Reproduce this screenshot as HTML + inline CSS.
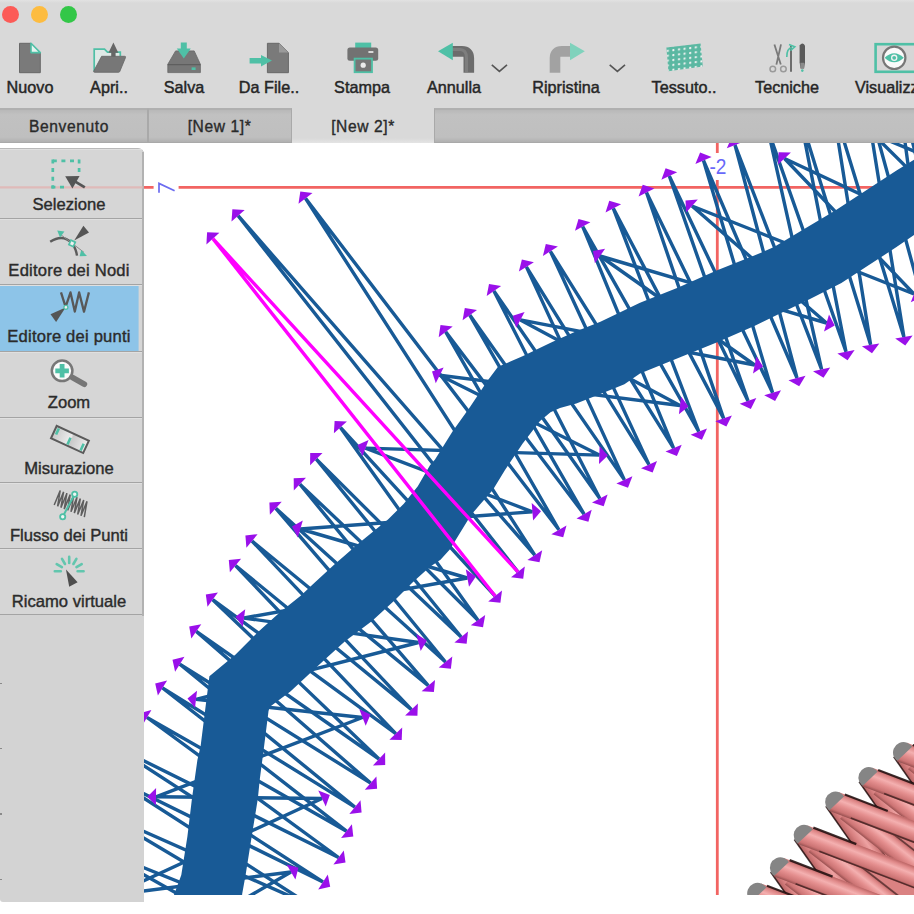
<!DOCTYPE html><html><head><meta charset="utf-8"><title>ui</title><style>

*{margin:0;padding:0;box-sizing:border-box}
html,body{width:914px;height:914px;overflow:hidden;background:#fff;font-family:"Liberation Sans",sans-serif;}
#tb{position:absolute;left:0;top:0;width:914px;height:109px;overflow:hidden;background:linear-gradient(#e2e2e2,#d9d9d9 3px,#d9d9d9);}
.tl{position:absolute;top:6px;width:17px;height:17px;border-radius:50%;}
.lbl{position:absolute;top:77.5px;font-size:16.2px;color:#262626;white-space:nowrap;transform:translateX(-50%);letter-spacing:0px;-webkit-text-stroke:0.45px #262626;}
#tabs{position:absolute;left:0;top:108px;width:914px;height:35px;overflow:hidden;background:linear-gradient(#d9d9d9,#d9d9d9 30px,#e4e4e4);}
.tab{position:absolute;top:0;height:35px;font-size:15.6px;letter-spacing:0.6px;color:#2a2a2a;text-align:center;}
.tab span{position:absolute;left:0;right:0;top:10px;-webkit-text-stroke:0.35px #2a2a2a;}
.tab.in span{top:8px;left:-1px}
.tab.in{background:linear-gradient(#b8b8b8,#c1c1c1 15%,#bfbfbf 85%,#b0b0b0);border:1px solid #a9a9a9;border-top:2px solid #b0b0b0;}
#canvas{position:absolute;left:0;top:143px;width:914px;height:752px;background:#fff;overflow:hidden}
#lp{position:absolute;left:0;top:148px;width:144px;height:753.5px;background:#d3d3d3;border-top:1px solid #b9b9b9;border-top-right-radius:6px;border-bottom-left-radius:3px;}
#lpb{position:absolute;left:141.6px;top:3px;width:2.2px;height:464px;background:#b2b2b2}
.tk{position:absolute;left:0;width:2px;height:1.6px;background:#8a8a8a}
.lb{position:absolute;left:0;width:141.8px;border-bottom:1.6px solid #a4a4a4;border-top:1px solid #e0e0e0;background:#d6d6d6}
.ll{position:absolute;left:0;width:138px;text-align:center;font-size:16.6px;color:#2b2b2b;white-space:nowrap;-webkit-text-stroke:0.4px #2b2b2b;}

</style></head><body>
<div id="canvas"><svg width="914" height="752" viewBox="0 143 914 752" style="position:absolute;left:0;top:0">
<g stroke="#f26462" stroke-width="2.8" fill="none">
<path d="M143 187.4H153.6M178.6 187.4H914M717.3 143V153M717.3 180V895"/>
</g>
<defs><linearGradient id="pk" x1="0" y1="0" x2="0" y2="1"><stop offset="0" stop-color="#bc6666"/><stop offset="0.14" stop-color="#df8888"/><stop offset="0.36" stop-color="#f4b0b0"/><stop offset="0.6" stop-color="#e48e8e"/><stop offset="0.86" stop-color="#cc7474"/><stop offset="1" stop-color="#985050"/></linearGradient><linearGradient id="pk2" x1="0" y1="0" x2="0" y2="1"><stop offset="0" stop-color="#6a3434"/><stop offset="0.12" stop-color="#d07878"/><stop offset="0.4" stop-color="#eea2a2"/><stop offset="0.75" stop-color="#d67e7e"/><stop offset="1" stop-color="#b46262"/></linearGradient></defs><path fill="#da8282" d="M941.7 717.3L1333.8 867.8L1170.4 1077.0L929.5 733.0Z"/><g transform="translate(938 727) rotate(55)"><rect x="0" y="-10.4" width="420" height="20.8" fill="url(#pk2)"/><path d="M-2 10.4H60" stroke="#1c0c0c" stroke-width="1.6" opacity="0.8"/></g><g transform="translate(938 727) rotate(38)"><rect x="14" y="-10.4" width="420" height="20.8" fill="url(#pk)"/><path d="M30 -10.4H150" stroke="#1c0c0c" stroke-width="1.8" opacity="0.55"/></g><g transform="translate(938 727) rotate(21)"><circle r="10.4" fill="#858585"/><path d="M7 -10.4H420V10.4H-3Z" fill="url(#pk)"/><path d="M6 -10.4H52" stroke="#1c0c0c" stroke-width="2.2" opacity="0.85"/><path d="M20 9.4H130" stroke="#1c0c0c" stroke-width="1.6" opacity="0.6"/></g><path fill="#da8282" d="M907.1 742.8L1299.2 893.3L1135.8 1102.5L894.9 758.5Z"/><g transform="translate(903.4 752.5) rotate(55)"><rect x="0" y="-10.4" width="420" height="20.8" fill="url(#pk2)"/><path d="M-2 10.4H60" stroke="#1c0c0c" stroke-width="1.6" opacity="0.8"/></g><g transform="translate(903.4 752.5) rotate(38)"><rect x="14" y="-10.4" width="420" height="20.8" fill="url(#pk)"/><path d="M30 -10.4H150" stroke="#1c0c0c" stroke-width="1.8" opacity="0.55"/></g><g transform="translate(903.4 752.5) rotate(21)"><circle r="10.4" fill="#858585"/><path d="M7 -10.4H420V10.4H-3Z" fill="url(#pk)"/><path d="M6 -10.4H52" stroke="#1c0c0c" stroke-width="2.2" opacity="0.85"/><path d="M20 9.4H130" stroke="#1c0c0c" stroke-width="1.6" opacity="0.6"/></g><path fill="#da8282" d="M872.5 767.8L1264.6 918.3L1101.2 1127.5L860.3 783.5Z"/><g transform="translate(868.8 777.5) rotate(55)"><rect x="0" y="-10.4" width="420" height="20.8" fill="url(#pk2)"/><path d="M-2 10.4H60" stroke="#1c0c0c" stroke-width="1.6" opacity="0.8"/></g><g transform="translate(868.8 777.5) rotate(38)"><rect x="14" y="-10.4" width="420" height="20.8" fill="url(#pk)"/><path d="M30 -10.4H150" stroke="#1c0c0c" stroke-width="1.8" opacity="0.55"/></g><g transform="translate(868.8 777.5) rotate(21)"><circle r="10.4" fill="#858585"/><path d="M7 -10.4H420V10.4H-3Z" fill="url(#pk)"/><path d="M6 -10.4H52" stroke="#1c0c0c" stroke-width="2.2" opacity="0.85"/><path d="M20 9.4H130" stroke="#1c0c0c" stroke-width="1.6" opacity="0.6"/></g><path fill="#da8282" d="M839.2 792.3L1231.3 942.8L1067.9 1152.0L827.0 808.0Z"/><g transform="translate(835.5 802.0) rotate(55)"><rect x="0" y="-10.4" width="420" height="20.8" fill="url(#pk2)"/><path d="M-2 10.4H60" stroke="#1c0c0c" stroke-width="1.6" opacity="0.8"/></g><g transform="translate(835.5 802.0) rotate(38)"><rect x="14" y="-10.4" width="420" height="20.8" fill="url(#pk)"/><path d="M30 -10.4H150" stroke="#1c0c0c" stroke-width="1.8" opacity="0.55"/></g><g transform="translate(835.5 802.0) rotate(21)"><circle r="10.4" fill="#858585"/><path d="M7 -10.4H420V10.4H-3Z" fill="url(#pk)"/><path d="M6 -10.4H52" stroke="#1c0c0c" stroke-width="2.2" opacity="0.85"/><path d="M20 9.4H130" stroke="#1c0c0c" stroke-width="1.6" opacity="0.6"/></g><path fill="#da8282" d="M807.7 825.5L1199.8 976.0L1036.4 1185.2L795.5 841.2Z"/><g transform="translate(804.0 835.2) rotate(55)"><rect x="0" y="-10.4" width="420" height="20.8" fill="url(#pk2)"/><path d="M-2 10.4H60" stroke="#1c0c0c" stroke-width="1.6" opacity="0.8"/></g><g transform="translate(804.0 835.2) rotate(38)"><rect x="14" y="-10.4" width="420" height="20.8" fill="url(#pk)"/><path d="M30 -10.4H150" stroke="#1c0c0c" stroke-width="1.8" opacity="0.55"/></g><g transform="translate(804.0 835.2) rotate(21)"><circle r="10.4" fill="#858585"/><path d="M7 -10.4H420V10.4H-3Z" fill="url(#pk)"/><path d="M6 -10.4H52" stroke="#1c0c0c" stroke-width="2.2" opacity="0.85"/><path d="M20 9.4H130" stroke="#1c0c0c" stroke-width="1.6" opacity="0.6"/></g><path fill="#da8282" d="M784.0 858.0L1176.1 1008.5L1012.7 1217.7L771.8 873.7Z"/><g transform="translate(780.3 867.7) rotate(55)"><rect x="0" y="-10.4" width="420" height="20.8" fill="url(#pk2)"/><path d="M-2 10.4H60" stroke="#1c0c0c" stroke-width="1.6" opacity="0.8"/></g><g transform="translate(780.3 867.7) rotate(38)"><rect x="14" y="-10.4" width="420" height="20.8" fill="url(#pk)"/><path d="M30 -10.4H150" stroke="#1c0c0c" stroke-width="1.8" opacity="0.55"/></g><g transform="translate(780.3 867.7) rotate(21)"><circle r="10.4" fill="#858585"/><path d="M7 -10.4H420V10.4H-3Z" fill="url(#pk)"/><path d="M6 -10.4H52" stroke="#1c0c0c" stroke-width="2.2" opacity="0.85"/><path d="M20 9.4H130" stroke="#1c0c0c" stroke-width="1.6" opacity="0.6"/></g><path fill="#da8282" d="M761.3 883.6L1153.4 1034.1L990.0 1243.3L749.1 899.3Z"/><g transform="translate(757.6 893.3) rotate(55)"><rect x="0" y="-10.4" width="420" height="20.8" fill="url(#pk2)"/><path d="M-2 10.4H60" stroke="#1c0c0c" stroke-width="1.6" opacity="0.8"/></g><g transform="translate(757.6 893.3) rotate(38)"><rect x="14" y="-10.4" width="420" height="20.8" fill="url(#pk)"/><path d="M30 -10.4H150" stroke="#1c0c0c" stroke-width="1.8" opacity="0.55"/></g><g transform="translate(757.6 893.3) rotate(21)"><circle r="10.4" fill="#858585"/><path d="M7 -10.4H420V10.4H-3Z" fill="url(#pk)"/><path d="M6 -10.4H52" stroke="#1c0c0c" stroke-width="2.2" opacity="0.85"/><path d="M20 9.4H130" stroke="#1c0c0c" stroke-width="1.6" opacity="0.6"/></g><path fill="#da8282" d="M738.7 910.3L1130.8 1060.8L967.4 1270.0L726.5 926.0Z"/><g transform="translate(735 920) rotate(55)"><rect x="0" y="-10.4" width="420" height="20.8" fill="url(#pk2)"/><path d="M-2 10.4H60" stroke="#1c0c0c" stroke-width="1.6" opacity="0.8"/></g><g transform="translate(735 920) rotate(38)"><rect x="14" y="-10.4" width="420" height="20.8" fill="url(#pk)"/><path d="M30 -10.4H150" stroke="#1c0c0c" stroke-width="1.8" opacity="0.55"/></g><g transform="translate(735 920) rotate(21)"><circle r="10.4" fill="#858585"/><path d="M7 -10.4H420V10.4H-3Z" fill="url(#pk)"/><path d="M6 -10.4H52" stroke="#1c0c0c" stroke-width="2.2" opacity="0.85"/><path d="M20 9.4H130" stroke="#1c0c0c" stroke-width="1.6" opacity="0.6"/></g>
<g stroke="#185a96" stroke-width="3.4" fill="none" stroke-linejoin="bevel">
<path d="M262.0 1010.0L92.0 925.0L274.0 982.0L95.0 888.0L286.0 955.0L100.0 850.0L298.0 930.0L100.0 812.0L310.0 905.0L114.0 779.0L323.0 882.0L112.0 745.0L338.6 857.5L147.0 717.5L346.5 831.2L162.5 688.0L354.9 807.1L179.8 664.2L370.6 783.1L196.3 631.4L379.0 759.0L212.7 599.7L395.8 733.7L235.5 565.5L411.5 709.6L252.0 541.0L428.3 685.6L275.8 508.3L445.5 662.0L299.9 484.2L461.2 637.0L316.3 459.1L478.0 620.2L340.4 427.4L495.1 596.0"/><path d="M517.9 571.9L238.1 215.7L534.8 555.1L305.5 198.4L558.9 529.8L445.7 331.9L584.1 514.2L469.8 315.1L599.8 498.5L493.9 291.0L624.4 479.9L526.4 266.9L649.0 464.6L550.4 251.3L673.6 448.1L582.7 226.5L698.8 431.7L613.3 208.3L723.6 418.4L646.5 192.5L748.0 400.9L669.3 176.0L772.6 392.8L703.5 160.5L797.0 378.0L735.0 145.0L821.6 369.3L768.0 130.0L846.0 351.8L800.0 116.0L870.6 344.8L832.0 102.0L903.9 337.0L864.0 88.0L930.0 328.0L896.0 75.0L956.0 318.0L928.0 62.0L982.0 308.0L960.0 50.0L1008.0 298.0"/><path d="M262.0 950.0L70.0 1000.0L291.0 872.0L113.0 895.0L322.0 798.5L156.0 796.8L362.5 717.5L196.0 699.4L418.5 642.5L244.0 618.0L467.4 578.0L300.3 529.0L532.4 511.8L365.5 448.1L599.3 455.1L439.7 375.3L680.0 405.5L520.4 319.9L754.7 365.0L600.0 256.0L826.5 323.0L692.0 206.0L914.0 294.0L784.5 158.5L1000.0 260.0L873.0 134.0L1090.0 225.0L965.0 95.0L1180.0 190.0"/>
</g>
<path fill="#185a96" d="M173.6 896.0L181.3 874.9L187.4 836.6L192.0 798.3L197.4 760.0L200.6 746.3L205.0 711.3L209.4 676.3L235.6 654.4L257.5 632.5L279.4 612.8L301.3 595.3L311.0 586.0L333.8 565.0L360.0 542.3L388.0 519.5L403.8 503.8L417.8 486.3L430.0 465.3L435.0 459.5L452.5 431.5L470.0 407.0L487.5 380.8L498.0 366.8L522.5 356.3L552.2 342.1L576.3 331.3L600.4 321.7L624.4 310.2L640.0 302.8L678.3 287.5L716.6 270.6L754.9 255.3L774.0 247.1L804.6 228.8L835.3 210.4L865.9 190.5L896.5 170.6L916.0 158.5L916.0 233.5L896.5 247.1L865.9 267.0L841.4 283.0L810.0 299.0L780.0 313.5L754.9 325.8L716.6 342.6L678.3 357.9L640.0 373.5L624.4 384.2L600.4 393.9L576.3 403.5L560.0 407.9L550.5 412.3L540.0 421.0L522.5 443.8L505.0 470.0L492.8 490.0L480.0 504.6L471.0 515.0L450.0 549.3L440.5 559.8L430.0 566.8L412.5 582.5L395.0 600.0L372.0 621.0L345.0 641.3L323.2 661.0L290.4 691.6L269.6 707.0L268.5 711.3L264.1 746.3L259.7 780.0L257.9 798.3L251.7 836.6L245.6 874.9L241.8 896.0Z"/>
<g fill="#9a10ea">
<path d="M83.8 922.4L94.6 916.6L89.4 933.4Z"/>
<path d="M269.7 1013.8L258.1 1017.9L265.9 1002.1Z"/>
<path d="M86.9 885.2L97.9 879.7L92.1 896.3Z"/>
<path d="M281.6 986.0L269.9 989.8L278.1 974.2Z"/>
<path d="M92.0 846.8L103.3 841.8L96.7 858.2Z"/>
<path d="M293.5 959.2L281.7 962.7L290.3 947.3Z"/>
<path d="M92.1 808.5L103.6 804.0L96.4 820.0Z"/>
<path d="M305.4 934.4L293.5 937.6L302.5 922.4Z"/>
<path d="M106.3 775.2L117.9 771.1L110.1 786.9Z"/>
<path d="M317.2 909.7L305.2 912.4L314.8 897.6Z"/>
<path d="M104.3 741.2L115.9 737.1L108.1 752.9Z"/>
<path d="M330.2 886.7L318.2 889.4L327.8 874.6Z"/>
<path d="M139.5 713.2L151.4 709.9L142.6 725.1Z"/>
<path d="M345.5 862.6L333.4 864.6L343.8 850.4Z"/>
<path d="M155.2 683.5L167.1 680.5L157.9 695.5Z"/>
<path d="M353.3 836.5L341.1 838.1L351.9 824.3Z"/>
<path d="M172.5 659.7L184.5 656.7L175.1 671.7Z"/>
<path d="M361.6 812.5L349.3 813.9L360.5 800.3Z"/>
<path d="M189.2 626.5L201.3 624.2L191.3 638.6Z"/>
<path d="M377.1 788.7L364.8 789.7L376.4 776.5Z"/>
<path d="M205.8 594.6L217.9 592.6L207.5 606.8Z"/>
<path d="M385.2 764.9L372.9 765.4L385.1 752.6Z"/>
<path d="M228.8 560.1L241.1 558.7L229.9 572.3Z"/>
<path d="M401.7 739.9L389.4 739.8L402.2 727.6Z"/>
<path d="M245.4 535.5L257.6 534.2L246.4 547.8Z"/>
<path d="M417.4 715.8L405.1 715.6L417.9 703.6Z"/>
<path d="M269.4 502.5L281.7 501.8L269.9 514.8Z"/>
<path d="M433.9 692.1L421.6 691.3L435.0 679.9Z"/>
<path d="M293.7 478.3L306.0 477.8L293.8 490.6Z"/>
<path d="M450.9 668.7L438.7 667.6L452.3 656.4Z"/>
<path d="M310.2 453.0L322.5 452.9L310.1 465.3Z"/>
<path d="M466.6 643.7L454.4 642.6L468.0 631.4Z"/>
<path d="M334.6 421.1L346.9 421.5L333.9 433.3Z"/>
<path d="M483.0 627.2L470.8 625.3L485.2 615.1Z"/>
<path d="M207.1 232.3L219.4 232.7L206.4 244.5Z"/>
<path d="M500.4 602.7L488.2 601.5L502.0 590.5Z"/>
<path d="M232.4 209.2L244.7 209.9L231.5 221.5Z"/>
<path d="M523.2 578.7L511.0 577.3L524.8 566.5Z"/>
<path d="M300.3 191.6L312.5 193.1L298.5 203.7Z"/>
<path d="M539.5 562.3L527.4 559.9L542.2 550.3Z"/>
<path d="M440.5 325.1L452.7 326.6L438.7 337.2Z"/>
<path d="M563.2 537.3L551.3 534.2L566.5 525.4Z"/>
<path d="M464.8 308.1L477.0 310.0L462.6 320.2Z"/>
<path d="M588.4 521.7L576.5 518.6L591.7 509.8Z"/>
<path d="M489.0 283.9L501.1 286.0L486.7 296.0Z"/>
<path d="M603.7 506.2L592.0 502.5L607.6 494.5Z"/>
<path d="M521.9 259.6L533.9 262.3L518.9 271.5Z"/>
<path d="M628.0 487.7L616.4 483.6L632.4 476.2Z"/>
<path d="M545.8 244.0L557.9 246.6L542.9 256.0Z"/>
<path d="M652.6 472.4L641.0 468.3L657.0 460.9Z"/>
<path d="M578.5 219.0L590.4 222.2L575.0 230.8Z"/>
<path d="M676.9 456.1L665.5 451.4L681.7 444.8Z"/>
<path d="M609.3 200.7L621.1 204.2L605.5 212.4Z"/>
<path d="M701.9 439.7L690.6 434.8L707.0 428.6Z"/>
<path d="M642.7 184.8L654.4 188.6L638.6 196.4Z"/>
<path d="M726.4 426.5L715.3 421.2L731.9 415.6Z"/>
<path d="M665.6 168.2L677.2 172.2L661.4 179.8Z"/>
<path d="M750.8 409.0L739.7 403.8L756.3 398.0Z"/>
<path d="M700.1 152.6L711.6 157.0L695.4 164.0Z"/>
<path d="M775.1 401.0L764.2 395.3L781.0 390.3Z"/>
<path d="M731.9 137.0L743.2 141.8L726.8 148.2Z"/>
<path d="M799.2 386.3L788.5 380.3L805.5 375.7Z"/>
<path d="M765.1 121.9L776.3 127.1L759.7 132.9Z"/>
<path d="M823.5 377.7L813.0 371.2L830.2 367.4Z"/>
<path d="M797.5 107.8L808.4 113.4L791.6 118.6Z"/>
<path d="M847.6 360.2L837.4 353.5L854.6 350.1Z"/>
<path d="M829.5 93.8L840.4 99.4L823.6 104.6Z"/>
<path d="M872.0 353.3L861.9 346.2L879.3 343.4Z"/>
<path d="M861.7 79.7L872.5 85.7L855.5 90.3Z"/>
<path d="M905.3 345.5L895.2 338.4L912.6 335.6Z"/>
<path d="M893.9 66.7L904.5 72.9L887.5 77.1Z"/>
<path d="M931.1 336.5L921.3 329.2L938.7 326.8Z"/>
<path d="M926.2 53.6L936.6 60.1L919.4 63.9Z"/>
<path d="M956.9 326.5L947.3 319.0L964.7 317.0Z"/>
<path d="M958.4 41.6L968.6 48.3L951.4 51.7Z"/>
<path d="M982.7 316.6L973.2 308.7L990.8 307.3Z"/>
<path d="M61.7 1002.2L67.8 991.5L72.2 1008.5Z"/>
<path d="M298.4 867.7L295.4 879.6L286.6 864.4Z"/>
<path d="M104.5 896.1L111.9 886.3L114.1 903.7Z"/>
<path d="M329.8 794.9L325.7 806.5L318.3 790.5Z"/>
<path d="M147.4 796.7L156.1 788.0L155.9 805.6Z"/>
<path d="M370.5 714.4L365.7 725.7L359.3 709.3Z"/>
<path d="M187.5 698.5L197.0 690.7L195.0 708.1Z"/>
<path d="M426.8 640.4L420.7 651.0L416.3 634.0Z"/>
<path d="M235.5 616.8L245.2 609.3L242.8 626.7Z"/>
<path d="M475.9 576.5L469.0 586.7L465.8 569.3Z"/>
<path d="M292.0 526.6L302.8 520.6L297.8 537.4Z"/>
<path d="M541.0 511.2L533.1 520.6L531.7 503.0Z"/>
<path d="M357.5 445.0L368.6 439.9L362.4 456.3Z"/>
<path d="M607.9 455.4L599.0 463.9L599.6 446.3Z"/>
<path d="M432.0 371.5L443.6 367.4L435.8 383.2Z"/>
<path d="M688.5 406.6L678.9 414.2L681.1 396.8Z"/>
<path d="M512.8 315.8L524.6 312.1L516.2 327.7Z"/>
<path d="M763.1 366.6L753.0 373.6L756.4 356.4Z"/>
<path d="M593.0 251.0L605.1 248.8L594.9 263.2Z"/>
<path d="M834.7 325.4L824.0 331.4L829.0 314.6Z"/>
<path d="M685.5 200.4L697.8 199.4L686.2 212.6Z"/>
<path d="M922.0 297.2L910.8 302.2L917.2 285.8Z"/>
<path d="M778.6 152.3L790.9 152.4L778.1 164.6Z"/>
<path d="M1007.8 263.7L996.3 268.0L1003.7 252.0Z"/>
<path d="M866.9 127.9L879.2 127.8L866.8 140.2Z"/>
<path d="M1097.9 228.3L1086.6 233.1L1093.4 216.9Z"/>
<path d="M959.0 88.8L971.3 88.9L958.7 101.1Z"/>
<path d="M1187.9 193.5L1176.4 198.0L1183.6 182.0Z"/>
</g>
<path d="M495.1 596.0L212.9 238.6L517.9 571.9" stroke="#ff00ff" stroke-width="3.4" fill="none" stroke-linejoin="bevel"/>
<path d="M159 192.8V183.4L174.6 190.8" stroke="#6c6cf0" stroke-width="1.7" fill="none"/>
<text x="709.5" y="174.3" font-family="Liberation Sans, sans-serif" font-size="21.5" fill="#6868fa" textLength="17" lengthAdjust="spacingAndGlyphs">-2</text>
</svg></div>
<div id="tb">
<div class="tl" style="left:2px;background:#fc5b57"></div>
<div class="tl" style="left:31px;background:#fdbc40"></div>
<div class="tl" style="left:60px;background:#33c748"></div>
<div class="lbl" style="left:30px">Nuovo</div>
<div class="lbl" style="left:109px">Apri..</div>
<div class="lbl" style="left:184px">Salva</div>
<div class="lbl" style="left:269px">Da File..</div>
<div class="lbl" style="left:362px">Stampa</div>
<div class="lbl" style="left:454px">Annulla</div>
<div class="lbl" style="left:566px">Ripristina</div>
<div class="lbl" style="left:684px">Tessuto..</div>
<div class="lbl" style="left:787px">Tecniche</div>
<div class="lbl" style="left:855px;transform:none">Visualizza</div>
<svg width="914" height="108" viewBox="0 0 914 108" style="position:absolute;left:0;top:0"><path d="M19.5 43.3H31L40.3 52.6V72.7H19.5Z" fill="#7a7a7a" stroke="#686868" stroke-width="1"/><path d="M31 43.3L40.3 52.6H31Z" fill="#e6f4f0" stroke="#4fc0a6" stroke-width="1.6" stroke-linejoin="round"/><path d="M94.2 71V49.2H104.5L107.5 52.2H120.3V56" fill="#dfe9e6" stroke="#4fc0a6" stroke-width="1.7"/><path d="M113.4 42.6L118.3 52.8H115.6V57H111.2V52.8H108.5Z" fill="#666"/><path d="M101.6 56.3H124.6Q126 56.3 125.5 57.6L119.8 71.4Q119.4 72.3 118.4 72.3H94.6Q93.2 72.3 93.8 71Z" fill="#777" stroke="#666" stroke-width="0.8"/><path d="M175.6 50.9H194.2L200.4 64.3V72.6H167.8V64.3Z" fill="#777" stroke="#686868" stroke-width="0.8"/><path d="M167.8 64.6H200.4" stroke="#5e5e5e" stroke-width="1.2"/><rect x="191.6" y="67.4" width="4" height="2.6" fill="#4fc0a6"/><path d="M180.8 42.4H186.8V48.6H190.8L183.8 58.4L176.8 48.6H180.8Z" fill="#4fc0a6"/><path d="M267.4 43.3H279L288.4 52.6V72.7H267.4Z" fill="#7a7a7a" stroke="#686868" stroke-width="1"/><path d="M279 43.3L288.4 52.6H279Z" fill="#9a9a9a"/><path d="M249.6 58H261V55L272 60.6L261 66.6V63.4H249.6Z" fill="#4fc0a6"/><rect x="355.2" y="42.6" width="16" height="6" fill="#4fc0a6"/><rect x="347.4" y="47.4" width="30.8" height="13.4" rx="2.5" fill="#727272"/><rect x="368.4" y="51" width="5" height="2" fill="#d8d8d8"/><rect x="354.6" y="58.6" width="17.4" height="13.6" fill="#777" stroke="#4fc0a6" stroke-width="1.8"/><circle cx="363.2" cy="65.2" r="2.6" fill="#ececec"/><path d="M468.8 72.7V58Q468.8 51.4 462 51.4H450" fill="none" stroke="#6c6c6c" stroke-width="10.6"/><path d="M466.5 72.7V58Q466.5 49.5 460 49.5H450" fill="none" stroke="#8a8a8a" stroke-width="3" opacity="0.6"/><path d="M438 51.3L452.8 42.8V60.2Z" fill="#4fc0a6"/><path d="M491.8 64.8L499.4 71.4L507 64.8" fill="none" stroke="#555" stroke-width="1.6"/><path d="M555 72.7V58Q555 51.4 561.8 51.4H572" fill="none" stroke="#a2a2a2" stroke-width="10.6"/><path d="M584.8 51.3L570 42.8V60.2Z" fill="#7fd2bc"/><path d="M609.7 64.8L617.4 71.4L625 64.8" fill="none" stroke="#555" stroke-width="1.6"/><defs><pattern id="wv" width="5.6" height="4.9" patternUnits="userSpaceOnUse" patternTransform="translate(666.6 45) skewY(-7)"><rect width="5.6" height="4.9" fill="#5bb8a2"/><circle cx="1.2" cy="1.1" r="1.15" fill="#f4f4f4"/></pattern></defs><path d="M666.4 47.6L700.6 43.4L702.8 66.4L668.4 71.2Z" fill="url(#wv)"/><path d="M774.4 44.4L780.8 64.6M781 44.4L776.4 64.6" stroke="#7a7a7a" stroke-width="1.8" fill="none"/><circle cx="772.8" cy="69" r="2.8" fill="none" stroke="#9a9a9a" stroke-width="1.5"/><circle cx="783.4" cy="69" r="2.8" fill="none" stroke="#9a9a9a" stroke-width="1.5"/><path d="M791 46V71.8" stroke="#5a5a5a" stroke-width="1.7"/><path d="M786.8 57Q786.6 48.5 792 47.2M789 44.4L794.8 46.8L790.4 50.6" stroke="#4fc0a6" stroke-width="1.6" fill="none"/><path d="M799.6 45.5Q802.4 41.5 805 45.5V62.5L804 68.4H800.6L799.6 62.5Z" fill="#5a5a5a"/><rect x="800.4" y="62.8" width="3.8" height="5.6" fill="#8a8a8a"/><circle cx="802.3" cy="70.6" r="1.3" fill="#4fc0a6"/><rect x="875.6" y="44.2" width="50" height="27.6" fill="#d6d6d6" stroke="#4fc0a6" stroke-width="2.6"/><circle cx="894.2" cy="57.8" r="11.2" fill="#fafafa" stroke="#777" stroke-width="2.2"/><path d="M884.6 57.8Q894.2 48.8 903.8 57.8Q894.2 66.8 884.6 57.8Z" fill="#4fc0a6"/><circle cx="894.2" cy="57.8" r="3.2" fill="#f2f2f2"/><circle cx="894.2" cy="57.8" r="1.9" fill="#4fc0a6"/></svg>
</div>
<div id="tabs">
<div class="tab in" style="left:-1px;width:149px"><span style="left:-9px">Benvenuto</span></div>
<div class="tab in" style="left:148px;width:144px"><span>[New 1]*</span></div>
<div class="tab" style="left:292px;width:142px"><span>[New 2]*</span></div>
<div class="tab in" style="left:434px;width:490px"></div>
</div>
<div id="lp"><div id="lpb"></div>
<div class="tk" style="top:533.5px"></div>
<div class="tk" style="top:598.8px"></div>
<div class="tk" style="top:664.0px"></div>
<div class="tk" style="top:729.5px"></div>
<div class="lb" style="top:0.0px;height:69.5px;"></div>
<div class="ll" style="top:46.4px;">Selezione</div>
<div class="lb" style="top:69.5px;height:66.5px;"></div>
<div class="ll" style="top:112.2px;letter-spacing:0.2px;">Editore dei Nodi</div>
<div class="lb" style="top:136.0px;height:66.5px;background:#8dc4e8;box-shadow:inset -3.4px 0 0 #d6d6d6;"></div>
<div class="ll" style="top:178.2px;letter-spacing:0.2px;">Editore dei punti</div>
<div class="lb" style="top:202.5px;height:66.3px;"></div>
<div class="ll" style="top:244.3px;">Zoom</div>
<div class="lb" style="top:268.8px;height:65.6px;"></div>
<div class="ll" style="top:310.4px;">Misurazione</div>
<div class="lb" style="top:334.4px;height:65.6px;"></div>
<div class="ll" style="top:376.5px;">Flusso dei Punti</div>
<div class="lb" style="top:400.0px;height:66.0px;"></div>
<div class="ll" style="top:442.6px;">Ricamo virtuale</div>
<svg width="143" height="500" viewBox="0 148 143 500" style="position:absolute;left:0;top:-1px"><path d="M0 187.4H143" stroke="#e2b4b2" stroke-width="2.4" opacity="0.8"/><path d="M52.8 160.9H79.1" stroke="#4fc0a6" stroke-width="2.7" stroke-dasharray="4 4.6" fill="none"/><path d="M52.8 159.5V188.5" stroke="#4fc0a6" stroke-width="2.7" stroke-dasharray="4 4.6" fill="none"/><path d="M79.1 159.5V174" stroke="#4fc0a6" stroke-width="2.7" stroke-dasharray="4 4.6" fill="none"/><path d="M51.4 187.2H66" stroke="#4fc0a6" stroke-width="2.7" stroke-dasharray="4 4.6" fill="none"/><path d="M65.2 176.2L79.6 176L72.4 188.4Z" fill="#555"/><path d="M73.6 180.6L84.8 187.4" stroke="#555" stroke-width="2.8"/><path d="M50.2 241.8Q63 233.5 72 243.4Q76 248.5 77 255.6" stroke="#5c5c5c" stroke-width="2.4" fill="none"/><path d="M59.4 233.6L84 252.4" stroke="#8a8a8a" stroke-width="1"/><path d="M57.2 230.6L64.4 231.4L60 237.4Z" fill="#4fc0a6"/><path d="M81.2 250L87 256L79.6 256.2Z" fill="#4fc0a6"/><path d="M74.2 240.6L83.4 225.8L89 232.6Z" fill="#555"/><rect x="69.7" y="241" width="4.8" height="4.8" fill="#f0f0f0" stroke="#4fc0a6" stroke-width="1.7" transform="rotate(25 72.1 243.4)"/><path d="M61 292.4L65.6 306.8L70.5 292.4L74.8 311.6L79.1 292.4L84 311.6L88.9 292.4" stroke="#585858" stroke-width="2.3" fill="none" stroke-linejoin="round"/><path d="M65.6 307.4L50.5 314.2L56.1 322.1Z" fill="#555"/><circle cx="65.9" cy="307.3" r="2" fill="#eee" stroke="#4fc0a6" stroke-width="1.3"/><path d="M72 377.2L84.4 384.2" stroke="#767676" stroke-width="5.6" stroke-linecap="round"/><circle cx="62.1" cy="370.8" r="10.3" fill="#fafafa" stroke="#777" stroke-width="2.5"/><path d="M62.1 364V377.6M55.3 370.8H68.9" stroke="#4fc0a6" stroke-width="4.8"/><defs><linearGradient id="rl" x1="0" y1="0" x2="1" y2="0"><stop offset="0" stop-color="#c9c9c9"/><stop offset="0.5" stop-color="#ececec"/><stop offset="0.55" stop-color="#c9c9c9"/><stop offset="1" stop-color="#ececec"/></linearGradient></defs><g transform="translate(56.7 425.9) rotate(24.7)"><rect x="0" y="0" width="35.4" height="13.6" fill="url(#rl)" stroke="#5a5a5a" stroke-width="2"/><path d="M3 1.4V8M17.5 5V12.4M32 5V12.4" stroke="#4fc0a6" stroke-width="2.6"/></g><path d="M54.2 505.0L60.2 490.5L57.6 506.4M57.6 506.4L63.6 491.9L60.9 507.7M60.9 507.7L66.9 493.2L64.2 509.1M64.2 509.1L70.2 494.6L67.6 510.4M67.6 510.4L73.6 495.9L71.0 511.8M71.0 511.8L77.0 497.2L74.3 513.1M74.3 513.1L80.3 498.6L77.7 514.5M77.7 514.5L83.7 500.0L81.0 515.8M81.0 515.8L87.0 501.3L84.3 517.1" stroke="#5e5e5e" stroke-width="1.5" fill="none"/><path d="M74.7 494.2L62.7 516.7" stroke="#4fc0a6" stroke-width="2"/><circle cx="74.7" cy="494.2" r="2.6" fill="#eef6f4" stroke="#4fc0a6" stroke-width="1.8"/><circle cx="62.7" cy="516.7" r="2.6" fill="#eef6f4" stroke="#4fc0a6" stroke-width="1.8"/><path d="M60.8 571.3L54.8 571.3M61.9 567.1L56.7 564.1M65.0 564.0L62.0 558.8M69.2 562.9L69.2 556.9M73.4 564.0L76.4 558.8M76.5 567.1L81.7 564.1M77.6 571.3L83.6 571.3" stroke="#62c6ae" stroke-width="2.6" stroke-linecap="round" fill="none"/><path d="M66 569.4L77.6 582.2L69.2 586.8Z" fill="#4e4e4e"/></svg>
</div>
</body></html>
